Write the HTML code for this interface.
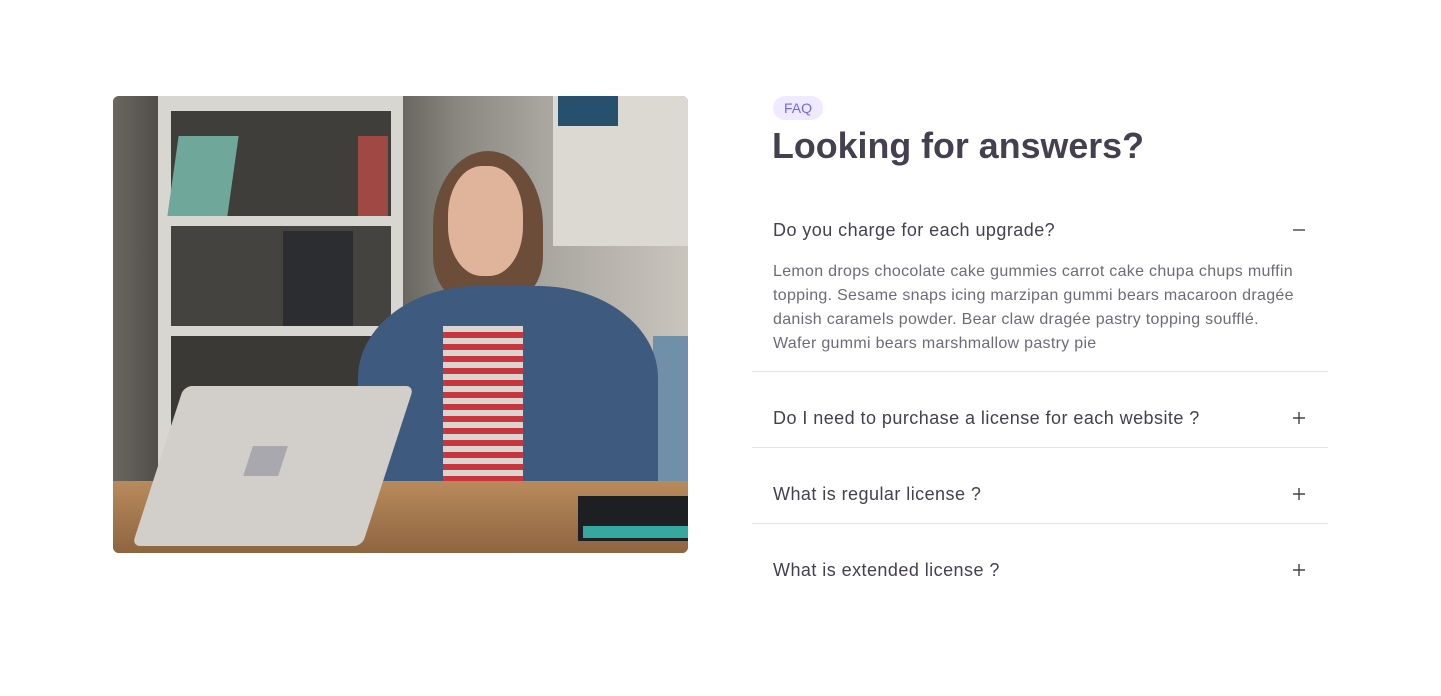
<!DOCTYPE html>
<html><head><style>
*{margin:0;padding:0;box-sizing:border-box}
body{width:1441px;height:696px;background:#fff;font-family:"Liberation Sans",sans-serif;position:relative;overflow:hidden}
.photo{position:absolute;left:113px;top:96px;width:575px;height:457px;border-radius:6px;overflow:hidden;background:#5d5a55}
.photo div{position:absolute}
.badge{position:absolute;left:773px;top:96px;width:50px;height:24px;border-radius:12px;background:#efeaff;color:#7367f0;font-size:14px;line-height:24px;text-align:center}
h1{position:absolute;left:772px;top:126px;font-size:35.8px;font-weight:600;color:#444050}
.q{position:absolute;left:773px;font-size:18px;letter-spacing:0.45px;color:#444050}
.ic{position:absolute;left:1293px;width:12px;height:12px}
.ans{position:absolute;left:773px;top:260px;white-space:nowrap;font-size:16px;letter-spacing:0.3px;line-height:24px;color:#6d6b77}
.hr{position:absolute;left:752px;width:576px;height:1px;background:#e4e4e7}
</style></head><body>
<div class="photo">
 <div style="left:0;top:0;width:575px;height:400px;background:linear-gradient(90deg,#6a665f 0%,#4a4844 10%,#57534d 45%,#8a8680 60%,#a9a6a0 75%,#c9c5bd 100%)"></div>
 <div style="left:45px;top:0;width:245px;height:390px;background:#d8d6d0"></div>
 <div style="left:58px;top:15px;width:220px;height:105px;background:#3f3e3b"></div>
 <div style="left:58px;top:130px;width:220px;height:100px;background:#45433f"></div>
 <div style="left:58px;top:240px;width:220px;height:140px;background:#3a3936"></div>
 <div style="left:170px;top:135px;width:70px;height:95px;background:#2c2d30"></div>
 <div style="left:60px;top:40px;width:60px;height:80px;background:#6fa79a;transform:skewX(-8deg)"></div>
 <div style="left:245px;top:40px;width:30px;height:80px;background:#a04944"></div>
 <div style="left:440px;top:0;width:135px;height:150px;background:#dcd9d3"></div>
 <div style="left:445px;top:0;width:60px;height:30px;background:#27506e"></div>
 <div style="left:540px;top:240px;width:35px;height:150px;background:#6f90a8"></div>
 <div style="left:320px;top:55px;width:110px;height:150px;border-radius:50% 50% 30% 30%;background:#6b4d3a"></div>
 <div style="left:335px;top:70px;width:75px;height:110px;border-radius:45%;background:#e0b49a"></div>
 <div style="left:245px;top:190px;width:300px;height:230px;border-radius:40% 40% 10% 10%;background:#3f5a7f"></div>
 <div style="left:330px;top:230px;width:80px;height:170px;background:repeating-linear-gradient(180deg,#d9d5d0 0 6px,#c9343d 6px 12px)"></div>
 <div style="left:0;top:385px;width:575px;height:72px;background:linear-gradient(180deg,#b98a5c,#8e6540)"></div>
 <div style="left:45px;top:290px;width:230px;height:160px;background:#d2cfca;transform:skewX(-18deg);border-radius:8px"></div>
 <div style="left:135px;top:350px;width:35px;height:30px;background:#a9a8af;transform:skewX(-18deg)"></div>
 <div style="left:465px;top:400px;width:110px;height:45px;background:#1d1f22"></div>
 <div style="left:470px;top:430px;width:105px;height:12px;background:#35a8a0"></div>
</div>
<div class="badge">FAQ</div>
<h1>Looking for answers?</h1>
<div class="q" style="top:220px">Do you charge for each upgrade?</div>
<svg class="ic" style="top:224px" viewBox="0 0 12 12"><path d="M0 6H12" stroke="#444050" stroke-width="1.4"/></svg>
<div class="ans">Lemon drops chocolate cake gummies carrot cake chupa chups muffin<br>topping. Sesame snaps icing marzipan gummi bears macaroon dragée<br>danish caramels powder. Bear claw dragée pastry topping soufflé.<br>Wafer gummi bears marshmallow pastry pie</div>
<div class="hr" style="top:371px"></div>
<div class="q" style="top:408px">Do I need to purchase a license for each website ?</div>
<svg class="ic" style="top:412px" viewBox="0 0 12 12"><path d="M0 6H12M6 0V12" stroke="#444050" stroke-width="1.4"/></svg>
<div class="hr" style="top:447px"></div>
<div class="q" style="top:484px">What is regular license ?</div>
<svg class="ic" style="top:488px" viewBox="0 0 12 12"><path d="M0 6H12M6 0V12" stroke="#444050" stroke-width="1.4"/></svg>
<div class="hr" style="top:523px"></div>
<div class="q" style="top:560px">What is extended license ?</div>
<svg class="ic" style="top:564px" viewBox="0 0 12 12"><path d="M0 6H12M6 0V12" stroke="#444050" stroke-width="1.4"/></svg>
</body></html>
